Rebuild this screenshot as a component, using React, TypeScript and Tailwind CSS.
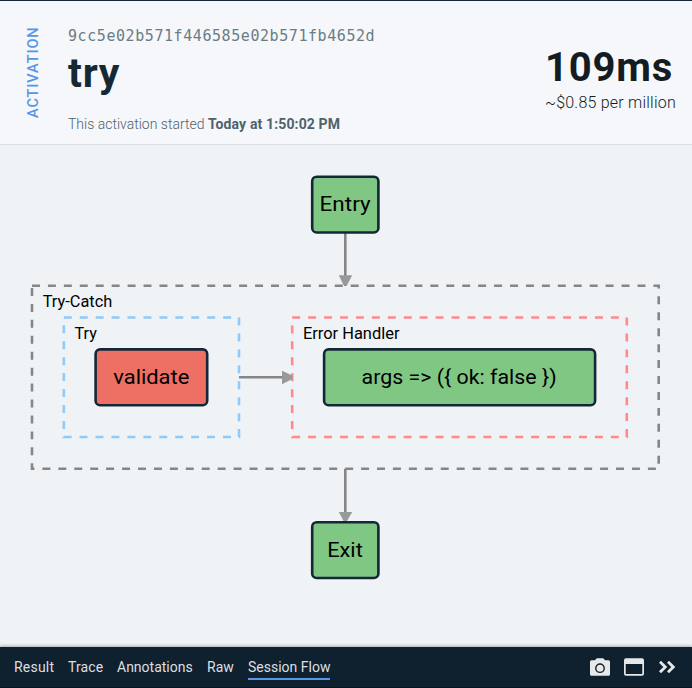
const EDGE = '#868686';
const INK = '#132737';

type NodeProps = { x: number; y: number; w: number; fill: string; label: string; tx: number; tw: number };

function FlowNode({ x, y, w, fill, label, tx, tw }: NodeProps) {
  return (
    <g>
      <rect x={x} y={y} width={w} height={55.8} rx={4.5} fill={fill} stroke={INK} strokeWidth={2.6} />
      <text x={tx} y={y + 34.5} textLength={tw} lengthAdjust="spacingAndGlyphs" fontSize={21} fill="#000">{label}</text>
    </g>
  );
}

type GroupProps = { x: number; y: number; w: number; h: number; color: string; label: string; tw: number };

function FlowGroup({ x, y, w, h, color, label, tw }: GroupProps) {
  return (
    <g>
      <rect x={x} y={y} width={w} height={h} fill="none" stroke={color} strokeWidth={2.6} strokeDasharray="7.967 7.967" />
      <text x={x + 10.7} y={y + 21.4} textLength={tw} lengthAdjust="spacingAndGlyphs" fontSize={15.7} fill="#000">{label}</text>
    </g>
  );
}

function Diagram() {
  return (
    <svg className="block h-[502px] w-full" viewBox="0 145 692 502" fontFamily='Roboto, "Liberation Sans", sans-serif'>
      <FlowGroup x={32} y={285.7} w={626.7} h={183.1} color={EDGE} label="Try-Catch" tw={69.6} />
      <FlowGroup x={63.8} y={317.5} w={175.2} h={119.5} color="#8fcafa" label="Try" tw={22.4} />
      <FlowGroup x={292.2} y={317.5} w={334.6} h={119.5} color="#ff8a8e" label="Error Handler" tw={96.6} />
      <g stroke={EDGE} strokeWidth={2.6}>
        <path d="M345.3 233V286M345.3 468.7V521M239 377.3H292" />
      </g>
      <g fill="#999">
        <path d="M338.8 275.3H352.2L347 285.3H343.6ZM338.8 512H352.2L347 521H343.6ZM282 370.8V384.2L292.3 379V375.6Z" />
      </g>
      <FlowNode x={312.2} y={176.7} w={66.2} fill="#81c784" label="Entry" tx={319.6} tw={51} />
      <FlowNode x={95.6} y={349.4} w={111.6} fill="#ee7064" label="validate" tx={113.3} tw={76} />
      <FlowNode x={324.1} y={349.4} w={271} fill="#81c784" label="args => ({ ok: false })" tx={361.6} tw={195} />
      <FlowNode x={312.2} y={522.2} w={66.2} fill="#81c784" label="Exit" tx={327.2} tw={35.6} />
    </svg>
  );
}

function Header() {
  return (
    <header className="flex h-[145px] border-t border-b border-t-[#132737] border-b-[#dce1e5] bg-[#f5f7fb]">
      <div className="flex w-[68px] justify-center pt-[26px]">
        <span className="h-[91px] rotate-180 text-[14.5px] leading-[18px] font-medium tracking-[0.9px] whitespace-nowrap text-[#5596e6] [writing-mode:vertical-rl]">
          ACTIVATION
        </span>
      </div>
      <div className="flex-1 pt-[25px] whitespace-nowrap">
        <div className="font-['DejaVu_Sans_Mono',monospace] text-[15px] leading-5 tracking-[0.57px] text-[#6b7c83]">
          9cc5e02b571f446585e02b571fb4652d
        </div>
        <h1 className="h-[68px] pt-[3px] text-[41px] leading-[48px] font-bold tracking-[0.8px] text-[#152935]">try</h1>
        <p className="text-[14px] leading-5 text-[#4f626c]">
          <span className="font-light">This activation started </span>
          <span className="font-bold tracking-[0.13px]">Today at 1:50:02 PM</span>
        </p>
      </div>
      <div className="w-[147px] pt-[43px] whitespace-nowrap text-[#141c21]">
        <div className="h-[47px] text-[40px] leading-[48px] font-bold tracking-[0.8px]">109ms</div>
        <div className="text-[16px] leading-6 font-light tracking-[0.22px]">~$0.85 per million</div>
      </div>
    </header>
  );
}

function Footer() {
  return (
    <footer className="relative flex h-[41px] items-start justify-between border-b border-[#08131c] bg-[#0f212e] pr-4 pl-[14px] text-[14px] text-[#dedfe0] shadow-[0_-1px_3px_rgba(0,0,0,0.3)]">
      <nav className="flex gap-[14px] pt-[10px] leading-5 whitespace-nowrap">
        <span className="w-10 tracking-[0.2px]">Result</span>
        <span className="w-[35px] tracking-[0.1px]">Trace</span>
        <span className="w-[76px]">Annotations</span>
        <span className="w-[27px]">Raw</span>
        <span className="h-[23px] w-[82px] border-b-2 border-[#5596e6]">Session Flow</span>
      </nav>
      <div className="flex items-center gap-[14px] pt-[11px] text-[#e8e8e8]">
        <svg width="20" height="18" viewBox="0 0 20 18">
          <path fill="currentColor" d="M1.5 2.2H5L6.2 .7Q6.6.2 7.2.2H12.8Q13.4.2 13.8.7L15 2.2H18.5Q20 2.2 20 3.7V16.3Q20 17.8 18.5 17.8H1.5Q0 17.8 0 16.3V3.7Q0 2.2 1.5 2.2Z" />
          <circle cx="10" cy="10.2" r="4.2" fill="none" stroke="#0f212e" strokeWidth="1.4" />
        </svg>
        <svg width="20" height="18" viewBox="0 0 20 18">
          <path fill="currentColor" fillRule="evenodd" d="M2 .2H18Q20 .2 20 2.2V15.8Q20 17.8 18 17.8H2Q0 17.8 0 15.8V2.2Q0 .2 2 .2ZM1.7 6V15.4Q1.7 16.1 2.4 16.1H17.6Q18.3 16.1 18.3 15.4V6Z" />
        </svg>
        <svg width="18" height="14" viewBox="0 0 18 14">
          <path d="M2 1.7L7.3 7L2 12.3M10 1.7L15.3 7L10 12.3" fill="none" stroke="currentColor" strokeWidth="2.8" />
        </svg>
      </div>
    </footer>
  );
}

export default function App() {
  return (
    <div className="flex h-[688px] w-[692px] flex-col overflow-hidden bg-[#eff3f6] font-['Roboto','Liberation_Sans',sans-serif]">
      <Header />
      <Diagram />
      <Footer />
    </div>
  );
}
